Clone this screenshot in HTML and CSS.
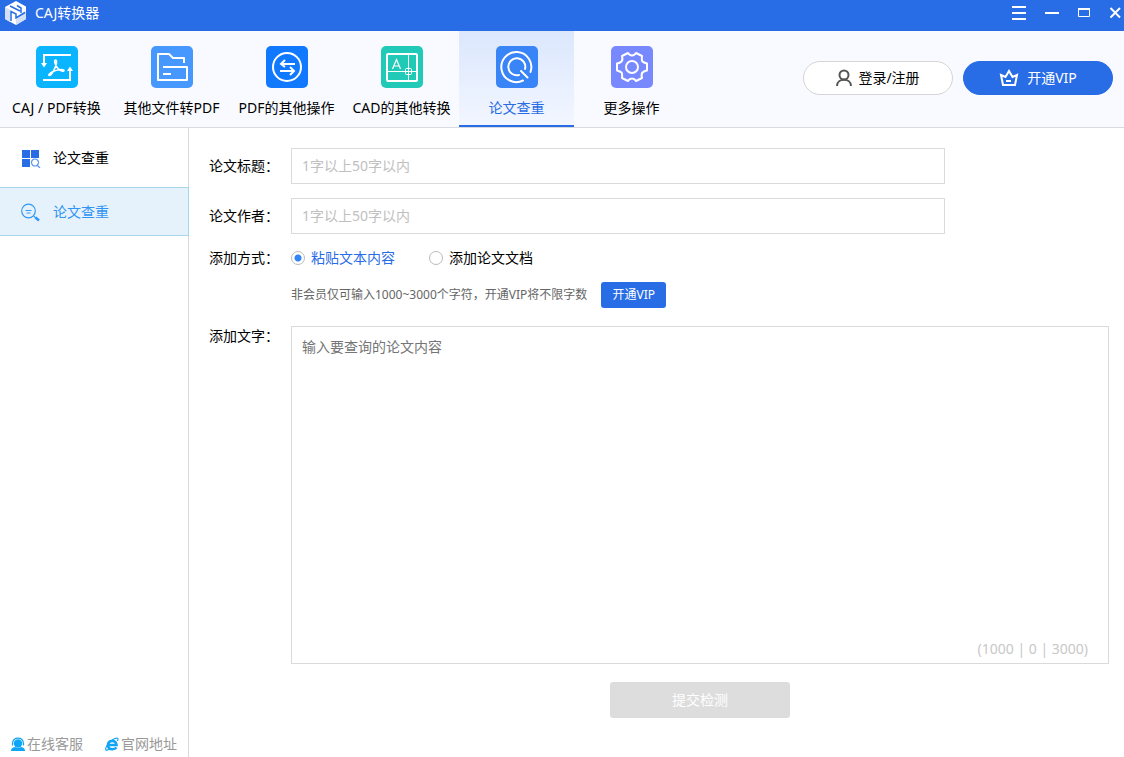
FILE: index.html
```html
<!DOCTYPE html>
<html lang="zh-CN">
<head>
<meta charset="utf-8">
<title>CAJ转换器</title>
<link rel="stylesheet" href="styles.css">
</head>
<body>
<header class="titlebar">
  <svg class="logo" width="22" height="24" viewBox="0 0 22 24">
    <path fill="#fff" d="M11 0 21 5.500V18L11 24 0 18V6Z"/>
    <path fill="#d3dff5" d="M0 6 5 9V21L0 18ZM11 16 21 10V18L11 24Z"/>
    <path fill="none" stroke="#286ce6" stroke-width="1.500" d="M5 5 15 10M6 20V10.500L11 13V17L20 11.500M12 4.500 16 7V12"/>
  </svg>
  <h1 class="app-name">CAJ转换器</h1>
  <div class="window-controls">
    <button class="win-btn" aria-label="菜单"><svg width="14" height="14" viewBox="0 0 14 14"><path d="M0 1H14M0 7H14M0 13H14" stroke="#fff" stroke-width="2"/></svg></button>
    <button class="win-btn" aria-label="最小化"><svg width="14" height="14" viewBox="0 0 14 14"><path d="M0 7H14" stroke="#fff" stroke-width="2"/></svg></button>
    <button class="win-btn" aria-label="最大化"><svg width="12" height="14" viewBox="0 0 12 14"><path d="M.5 3V10.500H11.500V3" fill="none" stroke="#fff"/><path d="M0 3H12" stroke="#fff" stroke-width="2"/></svg></button>
    <button class="win-btn" aria-label="关闭"><svg width="12" height="14" viewBox="0 0 12 14"><path d="M1.500 2 11 11.500M11 2 1.500 11.500" stroke="#fff" stroke-width="2"/></svg></button>
  </div>
</header>

<div class="toolbar">
  <nav class="tabs">
    <a class="tab" href="#caj">
      <svg class="tab-icon" viewBox="0 0 42 42"><rect width="42" height="42" rx="5" fill="#0ab4ff"/><g fill="none" stroke="#fff" stroke-width="2"><path d="M35 9H8V18M7 34H34V24"/><path d="M19.500 14C17.500 14 19.500 20 22 22.500 24 25 28 26 28 24.500 28 23 21 23.500 17 25.500 13 27.500 12 29.500 13.500 29.500 16 29 21 19 20.500 15.500 20.500 14.500 20 14 19.500 14Z" stroke-width="1.600"/></g><path fill="#fff" d="M5 17H11L8 21.500ZM31 25H37L34 20.500Z"/></svg>
      <span>CAJ / PDF转换</span></a>
    <a class="tab" href="#other">
      <svg class="tab-icon" viewBox="0 0 42 42"><rect width="42" height="42" rx="5" fill="#4698ff"/><path fill="none" stroke="#fff" stroke-width="2" stroke-linejoin="round" d="M33 17V12H22L18 8H7V34H36V21H12M12 28H20"/></svg>
      <span>其他文件转PDF</span></a>
    <a class="tab" href="#pdf">
      <svg class="tab-icon" viewBox="0 0 42 42"><rect width="42" height="42" rx="5" fill="#1079ff"/><g fill="none" stroke="#fff" stroke-width="2"><circle cx="21" cy="21" r="14"/><path d="M29 18H15M19 14 15 18 19 21M14 25H28M24 21 28 25 24 29"/></g></svg>
      <span>PDF的其他操作</span></a>
    <a class="tab" href="#cad">
      <svg class="tab-icon" viewBox="0 0 42 42"><rect width="42" height="42" rx="5" fill="#21cab7"/><g fill="none" stroke="#fff"><rect x="6" y="8" width="30" height="27" rx="1" stroke-width="2"/><path d="M27.500 8V35M6 25.500H36"/><rect x="24.500" y="22.500" width="6" height="6" rx="1"/><path stroke-width="1.200" d="M11.500 23 15.500 13.500 19.500 23M13 20H18"/></g></svg>
      <span>CAD的其他转换</span></a>
    <a class="tab tab-active" href="#check" aria-current="page">
      <svg class="tab-icon" viewBox="0 0 42 42"><rect width="42" height="42" rx="5" fill="#3984f7"/><g fill="none" stroke="#fff" stroke-width="2" stroke-linecap="round"><path d="M27 34.500A15 15 0 1 1 34.500 26"/><path d="M23 29A8.500 8.500 0 1 1 29 23M25 25 31.500 31.500"/></g></svg>
      <span>论文查重</span></a>
    <a class="tab" href="#more">
      <svg class="tab-icon" viewBox="0 0 42 42"><rect width="42" height="42" rx="5" fill="#7888ff"/><g fill="none" stroke="#fff" stroke-width="2" stroke-linejoin="round"><path d="M17 7Q18.500 9.500 21 9.500T25 7L31 10Q30.500 14.500 31.500 15.500T36 17.500V24.500Q33 25 31.500 26.500T31 32L25 35Q23.500 32.500 21 32.500T17 35L11 32Q11.500 27.500 10.500 26.500T6 24.500V17.500Q9 17 10.500 15.500T11 10Z"/><circle cx="21" cy="21" r="6"/></g></svg>
      <span>更多操作</span></a>
  </nav>
  <div class="account">
    <button class="pill"><svg width="16" height="18" viewBox="0 0 16 18"><g fill="none" stroke="#555" stroke-width="2"><circle cx="8" cy="6" r="4.500"/><path d="M1 17C1 8.500 15 8.500 15 17"/></g></svg>登录/注册</button>
    <button class="pill pill-vip"><svg width="20" height="18" viewBox="0 0 20 18"><path fill="none" stroke="#fff" stroke-width="2" d="M4 16H16L18 6 13.500 8 10 2 6.500 8 2 6ZM7 12H12"/></svg>开通VIP</button>
  </div>
</div>

<div class="workspace">
  <aside class="sidebar">
    <nav>
      <a class="side-item side-head" href="#check"><svg width="20" height="20" viewBox="0 0 20 20"><path fill="#286ce6" d="M1 2H9V10H1ZM10 2H18V10H10ZM1 11H9V19H1Z"/><path fill="none" stroke="#5a94f5" stroke-width="1.200" d="M16.500 17.500 19 20M17.500 14.500A3.500 3.500 0 1 1 10.500 14.500 3.500 3.500 0 1 1 17.500 14.500"/></svg>论文查重</a>
      <a class="side-item side-active" href="#check" aria-current="page"><svg width="20" height="20" viewBox="0 0 20 20"><g fill="none" stroke="#3398f5" stroke-width="1.200"><circle cx="7.500" cy="9" r="6.800"/><path d="M4.500 8.500H10.500M5.500 11H9.500M12.500 14 15 16"/><path d="M14.500 15.500 18 18.500" stroke-width="2.600"/></g></svg>论文查重</a>
    </nav>
    <footer class="side-links">
      <a class="side-link" href="#service"><svg width="14" height="14" viewBox="0 0 14 14"><g fill="#11a5f5"><circle cx="7" cy="6.500" r="4.200"/><path d="M0 14Q0 10.500 4 10Q7 12 10 10Q14 10.500 14 14Z"/></g><path fill="none" stroke="#11a5f5" stroke-width="1.200" d="M1.500 8.500V6.500Q2 1.200 7 1.200 12 1.200 12.500 6.500V8.500"/></svg>在线客服</a>
      <a class="side-link" href="#site"><svg width="14" height="14" viewBox="0 0 14 14"><path fill="none" stroke="#11a5f5" stroke-width="2.600" d="M3 8H11.500Q11 4 7.300 4 3 4 3 8 3 12.200 7.300 12.200 10 12.200 11.500 10.500"/><path fill="none" stroke="#11a5f5" stroke-width="1.200" d="M12.500 4Q14 0 10 1.500 5 3.500 2 8.500 0 12 1 13 2 13.500 4.500 12"/></svg>官网地址</a>
    </footer>
  </aside>

  <main class="content">
    <form class="form">
      <label class="label" for="title">论文标题：</label>
      <input class="text-input" id="title" type="text" placeholder="1字以上50字以内">
      <label class="label" for="author">论文作者：</label>
      <input class="text-input" id="author" type="text" placeholder="1字以上50字以内">
      <span class="label" id="mode-label">添加方式：</span>
      <div class="radios" role="radiogroup" aria-labelledby="mode-label">
        <label class="radio"><input type="radio" name="mode" checked><span>粘贴文本内容</span></label>
        <label class="radio"><input type="radio" name="mode"><span>添加论文文档</span></label>
      </div>
      <div class="hint">非会员仅可输入1000~3000个字符，开通VIP将不限字数<button class="vip-small" type="button">开通VIP</button></div>
      <label class="label label-top" for="body">添加文字：</label>
      <div class="editor">
        <textarea class="editor-text" id="body" placeholder="输入要查询的论文内容"></textarea>
        <span class="counter">(1000 | 0 | 3000)</span>
      </div>
      <button class="submit" type="button">提交检测</button>
    </form>
  </main>
</div>
</body>
</html>
```
FILE: styles.css
```css
* { box-sizing: border-box; }

body {
  margin: 0;
  min-height: 100vh;
  display: flex;
  flex-direction: column;
  background: #fff;
  color: #000;
  font: 14px/20px "Noto Sans", "Noto Sans CJK SC", sans-serif;
}

button, input, textarea { font: inherit; margin: 0; }
button { cursor: pointer; border: 0; }
a { color: inherit; text-decoration: none; }
svg { display: block; flex: none; }

.titlebar {
  display: flex;
  align-items: center;
  height: 31px;
  padding: 0 3px 6px 5px;
  background: #286ce6;
  color: #fff;
}
.app-name { margin: 0 0 0 8px; font-size: 14px; font-weight: 400; }
.window-controls { display: flex; gap: 19px; margin-left: auto; }
.win-btn { padding: 0; background: none; }

.toolbar {
  display: flex;
  justify-content: space-between;
  height: 97px;
  padding-right: 11px;
  background: #f9faff;
  border-bottom: 1px solid #d9dadf;
}
.tabs { display: flex; margin-left: -1px; }
.tab {
  display: flex;
  flex-direction: column;
  align-items: center;
  gap: 10px;
  width: 115px;
  padding-top: 15px;
  white-space: nowrap;
  border-bottom: 2px solid transparent;
}
.tab-active {
  color: #286ce6;
  background: linear-gradient(#dbe7fd, #f2f6ff);
  border-bottom-color: #286ce6;
}
.tab-icon { width: 42px; height: 42px; }

.account { display: flex; gap: 10px; padding-top: 30px; }
.pill {
  display: flex;
  align-items: center;
  justify-content: center;
  gap: 6px;
  width: 150px;
  height: 34px;
  border: 1px solid #d5d5d5;
  border-radius: 17px;
  background: #fff;
  color: #000;
}
.pill-vip { gap: 8px; border-color: #286ce6; background: #286ce6; color: #fff; }

.workspace { display: flex; flex: 1; }
.sidebar {
  display: flex;
  flex-direction: column;
  justify-content: space-between;
  width: 189px;
  border-right: 1px solid #d9d9dd;
}
.side-item {
  display: flex;
  align-items: center;
  gap: 12px;
  height: 49px;
  padding-left: 21px;
}
.side-head { height: 59px; }
.side-active {
  margin-right: -1px;
  border: 1px solid #a7d6ea;
  border-left: 0;
  background: #e6f2fb;
  color: #3094f3;
}
.side-links { display: flex; gap: 22px; padding: 0 0 3px 11px; color: #999; }
.side-link { display: flex; align-items: center; gap: 2px; }

.content { flex: 1; padding: 20px 15px 39px 20px; }
.form {
  display: grid;
  grid-template-columns: 82px 1fr;
  grid-template-rows: 36px 36px 20px 26px 1fr 36px;
  row-gap: 14px;
  height: 100%;
}
.label { align-self: center; white-space: nowrap; }
.label-top { align-self: start; padding-top: 4px; }
.text-input {
  width: 80%;
  padding: 0 10px;
  border: 1px solid #dadada;
  border-radius: 0;
  background: #fff;
  outline: 0;
}
.text-input::placeholder { color: #c0c0c0; }

.radios { display: flex; align-items: center; gap: 34px; }
.radio { display: flex; align-items: center; gap: 6px; }
.radio input {
  appearance: none;
  width: 14px;
  height: 14px;
  border: 1px solid #bbb;
  border-radius: 50%;
  background: #fff;
}
.radio input:checked { background: radial-gradient(circle, #3384f5 3px, #fff 4px); }
.radio input:checked + span { color: #286ce6; }

.hint {
  grid-column: 2;
  display: flex;
  align-items: center;
  gap: 14px;
  font-size: 12px;
  color: #666;
  white-space: nowrap;
}
.vip-small {
  width: 65px;
  height: 26px;
  padding: 0;
  border-radius: 3px;
  background: #286ce6;
  color: #fff;
}

.editor { position: relative; margin: 4px 0; }
.editor-text {
  display: block;
  width: 100%;
  height: 100%;
  padding: 10px;
  border: 1px solid #dadada;
  border-radius: 0;
  resize: none;
  outline: 0;
}
.editor-text::placeholder { color: #757575; }
.counter { position: absolute; right: 21px; bottom: 5px; color: #c8c8c8; }

.submit {
  grid-column: 2;
  justify-self: center;
  width: 180px;
  border-radius: 3px;
  background: #ddd;
  color: #fff;
}
```
